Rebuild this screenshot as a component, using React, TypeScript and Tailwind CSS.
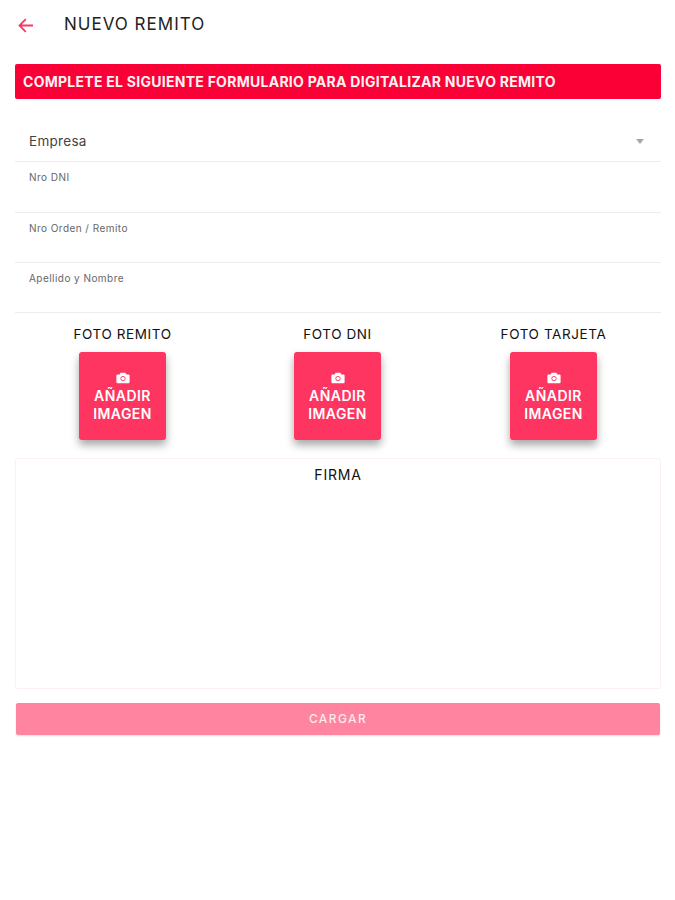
import React from "react";

const font = { fontFamily: "Inter, 'Liberation Sans', sans-serif" };

function Field({ label, height }: { label: string; height: string }) {
  return (
    <div className={`${height} border-b border-[#ececec] pl-[14px] pt-[9px] text-[10px] leading-[13px] tracking-[0.45px] text-[#666666]`}>
      {label}
    </div>
  );
}

function Photo({ title, width }: { title: string; width: string }) {
  return (
    <div className={`flex ${width} flex-col items-center`}>
      <div className="text-[13.5px] leading-[18px] tracking-[0.6px] text-[#111111]">{title}</div>
      <div className="mt-[9px] flex h-[88px] w-[87px] flex-col items-center justify-center rounded-[3px] bg-[#fd3560] pt-[2px] text-white shadow-[0_5px_9px_rgba(0,0,0,0.35)]">
        <svg width="14" height="12" viewBox="0 0 14 12" className="mb-[3px]">
          <path
            d="M4.6 0.8h4.8l1 1.6H12.4a1.2 1.2 0 0 1 1.2 1.2v6.4a1.2 1.2 0 0 1-1.2 1.2H1.6a1.2 1.2 0 0 1-1.2-1.2V3.6a1.2 1.2 0 0 1 1.2-1.2h2z"
            fill="#ffffff"
          />
          <circle cx="7" cy="6.6" r="2.2" fill="none" stroke="#fd3560" strokeWidth="0.9" />
        </svg>
        <div className="text-center text-[14px] font-semibold leading-[18px] tracking-[0.45px]">
          AÑADIR
          <br />
          IMAGEN
        </div>
      </div>
    </div>
  );
}

export default function App() {
  return (
    <div style={font} className="h-[900px] w-full overflow-hidden bg-white">
      <header className="flex h-[50px] items-center pl-[18px]">
        <svg width="15" height="15" viewBox="0 0 15 15" fill="none" stroke="#f93a60" strokeWidth="1.8">
          <path d="M15 7.5H1.5M7.8 1.2L1.5 7.5L7.8 13.8" />
        </svg>
        <div className="ml-[31px] text-[17px] tracking-[1px] text-[#222222]">NUEVO REMITO</div>
      </header>

      <div className="mx-[15px] mt-[14px] flex h-[35px] w-[646px] items-center rounded-[2px] bg-[#fb0037] pl-[8px] text-[14px] font-bold tracking-[0.27px] text-[#fff2f2]">
        COMPLETE EL SIGUIENTE FORMULARIO PARA DIGITALIZAR NUEVO REMITO
      </div>

      <div className="mx-[15px] mt-[15px] w-[646px]">
        <div className="flex h-[48px] items-center justify-between border-b border-[#ececec] pl-[14px] pr-[17px] pt-[8px] text-[13.5px] tracking-[0.3px] text-[#444444]">
          <span>Empresa</span>
          <span className="h-0 w-0 border-x-[4px] border-t-[5px] border-x-transparent border-t-[#a6a6a6]" />
        </div>
        <Field label="Nro DNI" height="h-[51px]" />
        <Field label="Nro Orden / Remito" height="h-[50px]" />
        <Field label="Apellido y Nombre" height="h-[50px]" />
      </div>

      <div className="ml-[15px] mt-[12px] flex">
        <Photo title="FOTO REMITO" width="w-[215px]" />
        <Photo title="FOTO DNI" width="w-[215px]" />
        <Photo title="FOTO TARJETA" width="w-[217px]" />
      </div>

      <div className="mx-[15px] mt-[18px] h-[231px] w-[646px] rounded-[3px] border border-[#fdf0f3] pt-[7px] text-center text-[14px] leading-[18px] tracking-[0.8px] text-[#111111]">
        FIRMA
      </div>

      <div className="mx-[16px] mt-[14px] flex h-[32px] w-[644px] items-center justify-center rounded-[2px] bg-[#fe84a0] text-[12px] font-medium tracking-[1.4px] text-[#ffe9ee] shadow-[0_1px_2px_rgba(0,0,0,0.12)]">
        CARGAR
      </div>
    </div>
  );
}
